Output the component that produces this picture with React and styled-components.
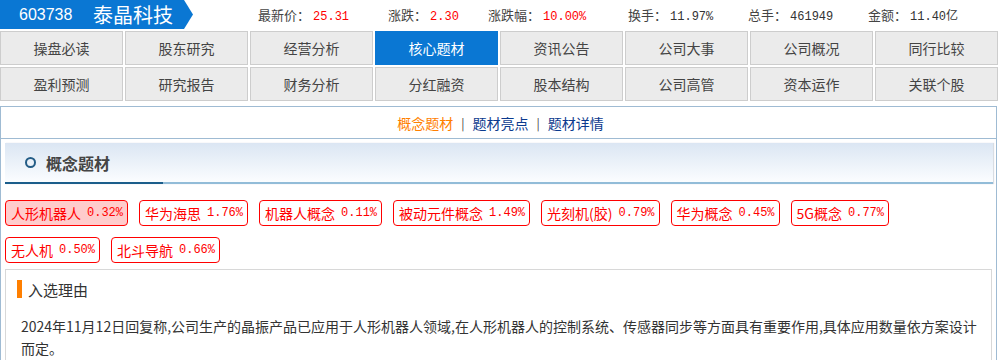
import styled, { createGlobalStyle } from "styled-components";

const GlobalStyle = createGlobalStyle`
  body {
    margin: 0;
    background: #fff;
    font-family: "Noto Sans CJK SC", "Liberation Sans", sans-serif;
    color: #333;
  }
`;

const stats = [
  { label: "最新价", value: "25.31", red: true, width: 130 },
  { label: "涨跌", value: "2.30", red: true, width: 100 },
  { label: "涨跌幅", value: "10.00%", red: true, width: 140 },
  { label: "换手", value: "11.97%", width: 120 },
  { label: "总手", value: "461949", width: 120 },
  { label: "金额", value: "11.40亿", width: 120 },
];

const navRows = [
  ["操盘必读", "股东研究", "经营分析", "核心题材", "资讯公告", "公司大事", "公司概况", "同行比较"],
  ["盈利预测", "研究报告", "财务分析", "分红融资", "股本结构", "公司高管", "资本运作", "关联个股"],
];

const tags = [
  { name: "人形机器人", pct: "0.32%", active: true },
  { name: "华为海思", pct: "1.76%" },
  { name: "机器人概念", pct: "0.11%" },
  { name: "被动元件概念", pct: "1.49%" },
  { name: "光刻机(胶)", pct: "0.79%" },
  { name: "华为概念", pct: "0.45%" },
  { name: "5G概念", pct: "0.77%" },
  { name: "无人机", pct: "0.50%" },
  { name: "北斗导航", pct: "0.66%" },
];

export default function App() {
  return (
    <>
      <GlobalStyle />
      <Page>
        <Header>
          <Banner>
            <Code>603738</Code>
            <Name>泰晶科技</Name>
          </Banner>
          <Stats>
            {stats.map((s) => (
              <Stat key={s.label} $width={s.width}>
                {s.label}：<Num $red={s.red}>{s.value}</Num>
              </Stat>
            ))}
          </Stats>
        </Header>

        <Nav>
          {navRows.flat().map((item) => (
            <NavCell key={item} $active={item === "核心题材"}>{item}</NavCell>
          ))}
        </Nav>

        <Panel>
          <SubTabs>
            <SubLink $current>概念题材</SubLink>
            <Sep>|</Sep>
            <SubLink>题材亮点</SubLink>
            <Sep>|</Sep>
            <SubLink>题材详情</SubLink>
          </SubTabs>

          <SectionHead>
            <Ring />
            <SectionTitle>概念题材</SectionTitle>
          </SectionHead>

          <Tags>
            {tags.map((t) => (
              <Tag key={t.name} $active={t.active}>
                {t.name}
                <TagNum>{t.pct}</TagNum>
              </Tag>
            ))}
          </Tags>

          <ReasonBox>
            <ReasonTitle>入选理由</ReasonTitle>
            <ReasonText>
              2024年11月12日回复称,公司生产的晶振产品已应用于人形机器人领域,在人形机器人的控制系统、传感器同步等方面具有重要作用,具体应用数量依方案设计而定。
            </ReasonText>
          </ReasonBox>
        </Panel>
      </Page>
    </>
  );
}

const Page = styled.div`
  width: 998px;
`;

const Header = styled.div`
  display: flex;
  align-items: center;
  height: 29px;
`;

const Banner = styled.div`
  display: flex;
  align-items: center;
  width: 193px;
  height: 29px;
  padding-left: 19px;
  box-sizing: border-box;
  background: #0a77d3;
  color: #fff;
  clip-path: polygon(0 0, 184px 0, 193px 50%, 184px 100%, 0 100%);
`;

const Code = styled.span`
  font-family: "Liberation Sans", sans-serif;
  font-size: 16px;
  width: 74px;
`;

const Name = styled.span`
  font-size: 20px;
`;

const Stats = styled.div`
  display: flex;
  align-items: baseline;
  margin-left: 65px;
  font-size: 13px;
  color: #444;
`;

const Stat = styled.div`
  width: ${(p) => p.$width}px;
  white-space: nowrap;
`;

const Num = styled.span`
  margin-left: 3px;
  font-family: "Liberation Mono", "Noto Sans CJK SC", monospace;
  font-size: 12px;
  color: ${(p) => (p.$red ? "#f00" : "#333")};
`;

const Nav = styled.div`
  display: grid;
  grid-template-columns: repeat(8, 123px);
  grid-auto-rows: 34px;
  column-gap: 2px;
  row-gap: 2px;
  margin-top: 2px;
`;

const NavCell = styled.div`
  display: flex;
  align-items: center;
  justify-content: center;
  box-sizing: border-box;
  border: 1px solid ${(p) => (p.$active ? "#0a77d3" : "#cdcdcd")};
  background: ${(p) => (p.$active ? "#0a77d3" : "#ebebeb")};
  color: ${(p) => (p.$active ? "#fff" : "#444")};
  font-size: 14px;
`;

const Panel = styled.div`
  margin-top: 5px;
  width: 997px;
  height: 260px;
  box-sizing: border-box;
  border: 1px solid #9fbbd3;
  border-bottom: none;
  overflow: hidden;
`;

const SubTabs = styled.div`
  display: flex;
  align-items: center;
  justify-content: center;
  height: 31px;
  border-bottom: 1px solid #9fbbd3;
  font-size: 14px;
  padding-left: 4px;
`;

const SubLink = styled.span`
  color: ${(p) => (p.$current ? "#ff7f00" : "#0b3a8e")};
`;

const Sep = styled.span`
  color: #444;
  font-size: 12px;
  margin: 0 8px;
`;

const SectionHead = styled.div`
  display: flex;
  align-items: center;
  margin: 4px 3px 0 4px;
  height: 39px;
  border-bottom: 2px solid #92bcd8;
  background: linear-gradient(#dbe6f3, #fbfdff);
  box-shadow: 1px 0 1px #d8dde3;
  position: relative;

  &::after {
    content: "";
    position: absolute;
    left: 0;
    bottom: -2px;
    width: 158px;
    height: 2px;
    background: #1b5e8b;
  }
`;

const Ring = styled.span`
  width: 7px;
  height: 7px;
  border: 2px solid #235c86;
  border-radius: 50%;
  margin-left: 20px;
`;

const SectionTitle = styled.span`
  margin-left: 10px;
  font-size: 16px;
  font-weight: bold;
  color: #444;
`;

const Tags = styled.div`
  display: flex;
  flex-wrap: wrap;
  gap: 11px 11px;
  margin: 16px 0 0 4px;
  padding-right: 80px;
`;

const Tag = styled.div`
  display: flex;
  align-items: center;
  height: 26px;
  box-sizing: border-box;
  padding: 0 4px 0 5px;
  border: 1px solid #f00;
  border-radius: 4px;
  background: ${(p) => (p.$active ? "#ffcccc" : "#fff")};
  color: #f00;
  font-size: 14px;
  white-space: nowrap;
`;

const TagNum = styled.span`
  margin-left: 6px;
  font-family: "Liberation Mono", monospace;
  font-size: 12px;
`;

const ReasonBox = styled.div`
  margin: 6px 4px 0 4px;
  border: 1px solid #d8d8d8;
  border-bottom: none;
  padding: 10px 6px 0 15px;
  height: 100px;
`;

const ReasonTitle = styled.div`
  display: flex;
  align-items: center;
  height: 18px;
  border-left: 5px solid #ff7f00;
  padding-left: 6px;
  margin-left: -4px;
  font-size: 15px;
  color: #333;
`;

const ReasonText = styled.p`
  margin: 17px 0 0 0;
  font-size: 14px;
  line-height: 22px;
  color: #333;
`;
